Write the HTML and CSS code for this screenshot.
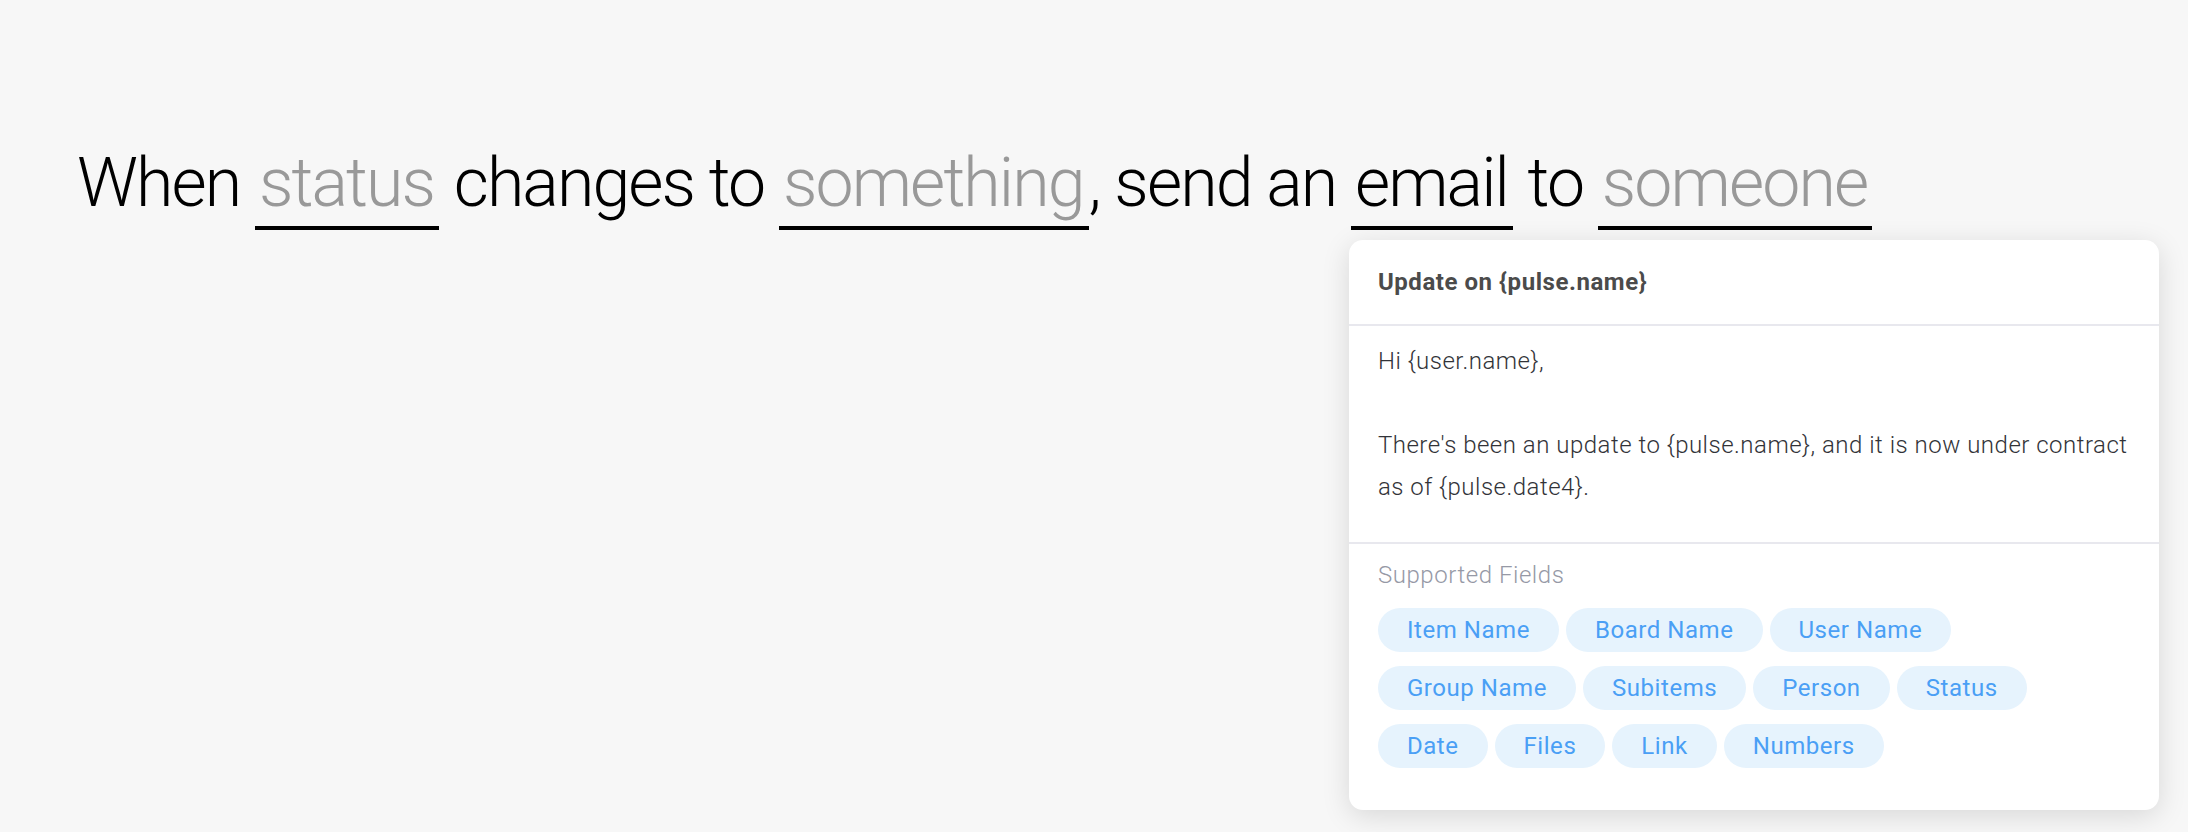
FILE: index.html
```html
<!DOCTYPE html>
<html lang="en">
<head>
<meta charset="utf-8">
<title>Automation recipe</title>
<link rel="stylesheet" href="styles.css">
</head>
<body>
<main class="page">
  <h1 class="recipe">When <span class="field placeholder">status</span> changes to <span class="field placeholder">something</span>, send an <span class="field anchor">email<div class="popover">
      <div class="popover-subject">Update on {pulse.name}</div>
      <div class="popover-body">
        <p class="para gap">Hi {user.name},</p>
        <p class="para">There's been an update to {pulse.name}, and it is now under contract as of {pulse.date4}.</p>
      </div>
      <div class="popover-fields">
        <div class="fields-label">Supported Fields</div>
        <div class="chips">
          <div class="chip-row">
            <span class="chip">Item Name</span>
            <span class="chip">Board Name</span>
            <span class="chip">User Name</span>
          </div>
          <div class="chip-row">
            <span class="chip">Group Name</span>
            <span class="chip">Subitems</span>
            <span class="chip">Person</span>
            <span class="chip">Status</span>
          </div>
          <div class="chip-row">
            <span class="chip">Date</span>
            <span class="chip">Files</span>
            <span class="chip">Link</span>
            <span class="chip">Numbers</span>
          </div>
        </div>
      </div>
    </div></span> to <span class="field placeholder">someone</span></h1>
</main>
</body>
</html>
```
FILE: styles.css
```css
* { box-sizing: border-box; }
html, body {
  margin: 0;
  padding: 0;
  background: #f7f7f7;
  font-family: Roboto, "Noto Sans", Arial, sans-serif;
}
.page {
  height: 832px;
  padding: 142px 0 0 77px;
}
.recipe {
  margin: 0;
  font-size: 68px;
  font-weight: 300;
  line-height: 82px;
  letter-spacing: -1.9px;
  color: #000;
  white-space: nowrap;
}
.field {
  display: inline-block;
  padding: 0 5px 2px 4px;
  border-bottom: 4px solid #000;
}
.placeholder { color: #999999; }
.anchor { position: relative; color: #000; }
.popover {
  position: absolute;
  top: calc(100% + 14px);
  left: -2px;
  width: 810px;
  background: #fff;
  border-radius: 14px;
  box-shadow: 0 6px 28px rgba(0, 0, 0, 0.13);
  white-space: normal;
  font-size: 24px;
  line-height: normal;
  letter-spacing: 0.55px;
  color: #323338;
  text-align: left;
}
.popover-subject {
  padding: 28px 29px;
  font-weight: 700;
  line-height: 28px;
  color: #4b4b4b;
  border-bottom: 2px solid #e8e8ee;
}
.popover-body {
  padding: 14px 29px 34px;
  font-weight: 300;
  line-height: 42px;
  letter-spacing: 0.5px;
  border-bottom: 2px solid #e8e8ee;
}
.para { margin: 0; }
.para.gap { margin-bottom: 42px; }
.popover-fields {
  padding: 10px 29px 42px;
}
.fields-label {
  font-weight: 300;
  line-height: 42px;
  color: #9699a6;
}
.chips {
  margin-top: 12px;
  display: flex;
  flex-direction: column;
  gap: 14px;
}
.chip-row {
  display: flex;
  gap: 7px;
}
.chip {
  height: 44px;
  line-height: 44px;
  padding: 0 29px;
  border-radius: 22px;
  background: #e6f3fd;
  color: #4a9ff5;
  font-weight: 400;
  font-size: 24px;
}
```
